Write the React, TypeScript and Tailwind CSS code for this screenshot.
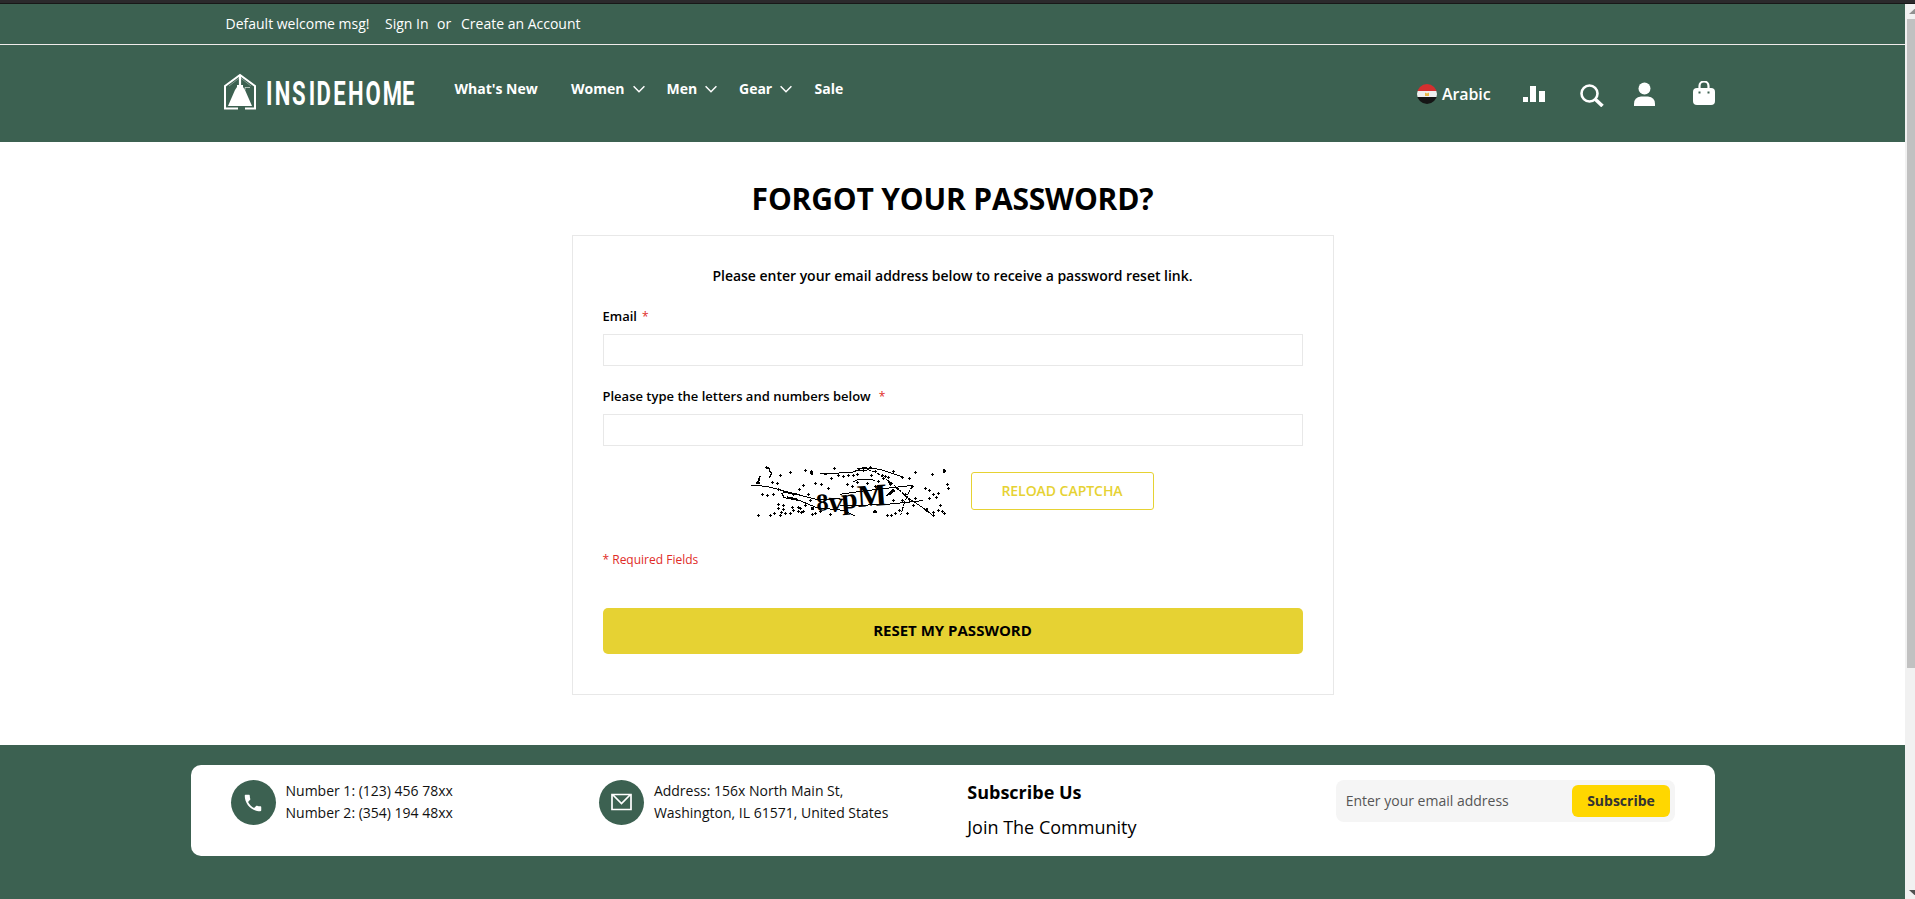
import React from "react";

const dots: [number, number][] = [
  [181, 64], [151, 73], [108, 48], [225, 56], [243, 60], [313, 52], [127, 92], [142, 97], [145, 114], [218, 101],
  [207, 115], [256, 96], [273, 100], [95, 130], [112, 132], [129, 128], [190, 130], [235, 128], [143, 158], [158, 163],
  [145, 172], [133, 185], [120, 193], [153, 183], [165, 187], [180, 185], [205, 180], [205, 168], [218, 180], [225, 163],
  [245, 170], [255, 185], [245, 190], [270, 180], [300, 190], [83, 193], [323, 72], [303, 82], [338, 75], [355, 72],
  [240, 148], [295, 110], [350, 98], [365, 105], [370, 73], [380, 70], [435, 60], [423, 73], [420, 48], [475, 78],
  [478, 92], [490, 60], [515, 78], [538, 80], [556, 64], [607, 70], [652, 100], [655, 112], [586, 112], [596, 118],
  [608, 130], [624, 125], [618, 138], [596, 142], [450, 118], [480, 125], [500, 112], [545, 105], [525, 130], [490, 148],
  [515, 148], [538, 145], [555, 142], [532, 187], [508, 178], [495, 187], [482, 192], [470, 193], [550, 162], [610, 182],
  [608, 193], [624, 177], [630, 162], [635, 180], [643, 185], [380, 92], [412, 95], [435, 105], [400, 58], [457, 72],
  [460, 82], [445, 90], [466, 75], [210, 172], [190, 178], [160, 175], [150, 192], [187, 168], [212, 184], [480, 98],
];

const blobs: [number, number][] = [[84, 95], [643, 60], [435, 182], [590, 177], [245, 66], [248, 172]];

function Captcha() {
  return (
    <svg className="h-[50px] w-[200px] overflow-visible" viewBox="60 45 600 150" fill="none" stroke="#000" strokeWidth="3" shapeRendering="crispEdges">
      {dots.map(([x, y], i) => {
        const px = Math.round(x / 3) * 3 + 1.5;
        const py = Math.round(y / 3) * 3 + 1.5;
        return <path key={i} d={`M${px - 4.5} ${py}h9M${px} ${py - 4.5}v9`} />;
      })}
      {blobs.map(([x, y], i) => (
        <circle key={i} cx={x} cy={y} r="5.5" fill="#000" stroke="none" />
      ))}
      <path d="M63 103L110 106L170 122L262 146L330 143" />
      <path d="M155 125L162 140L210 149L260 170L340 178L375 195" />
      <path d="M160 122L200 130M170 138L205 146" strokeWidth="5" />
      <path d="M270 67L300 68L370 63L400 50L450 55L520 78" />
      <path d="M272 67L292 69M380 53L425 52M385 58L410 58" strokeWidth="5" />
      <path d="M370 92L380 87L425 85L435 90" />
      <path d="M395 50L440 65L490 100L530 138" strokeDasharray="12 4" />
      <path d="M530 138L575 168L605 190" />
      <path d="M330 130L400 120L548 103M330 165L470 160L578 149" />
      <path d="M548 103L535 128L525 150L512 192" strokeDasharray="14 4" />
      <path d="M105 50L119 52M117 56L125 68L117 80" strokeWidth="4" />
      <path d="M84 95L90 75M470 135L490 115M475 130L495 118" strokeWidth="5" />
      <g fill="#000" stroke="none" fontFamily="'Liberation Serif', serif" fontWeight="700">
        <text x="260" y="180" fontSize="74" transform="rotate(-4 260 180)">8</text>
        <text x="293" y="181" fontSize="88" transform="rotate(4 293 181)">v</text>
        <text x="336" y="174" fontSize="88" transform="rotate(-5 336 174)">p</text>
        <text x="384" y="168" fontSize="94" transform="rotate(-4 384 168)">M</text>
      </g>
    </svg>
  );
}

function Logo() {
  return (
    <svg className="h-[38px] w-[196px] overflow-visible" viewBox="0 0 196 38" fill="none">
      <path d="M15 36.500H2V14L17 3L32 14V36.500H22" stroke="#fff" strokeWidth="2" />
      <path d="M17 3V14" stroke="#fff" strokeWidth="2.2" />
      <path d="M14 13H20V15L22 18L29 34H5L12 18L14 15Z" fill="#fff" />
      <path d="M22 18V15.500H27" stroke="#fff" strokeOpacity=".6" />
      <path d="M6 14L17 5.500L28 14" stroke="#fff" strokeOpacity=".35" strokeWidth="1" />
      <g transform="scale(.65 1)">
        <text
          x="66.2 79.5 106 131.8 143.7 169.8 192.3 219.2 245.7 275.5"
          y="33"
          fill="#fff"
          fontFamily="Roboto, sans-serif"
          fontWeight="700"
          fontSize="34"
        >
          INSIDEHOME
        </text>
      </g>
    </svg>
  );
}

function Chevron() {
  return (
    <svg className="mt-px h-3 w-3" viewBox="0 0 12 12" fill="none" stroke="#fff" strokeWidth="1.5">
      <path d="M.6 3.300L6 8.700L11.400 3.300" />
    </svg>
  );
}

function NavItem({ label, width, menu }: { label: string; width: string; menu?: boolean }) {
  return (
    <a className={`flex items-center justify-between ${width}`}>
      {label}
      {menu && <Chevron />}
    </a>
  );
}

function Flag() {
  return (
    <svg className="h-5 w-5" viewBox="0 0 20 20">
      <clipPath id="round"><circle cx="10" cy="10" r="10" /></clipPath>
      <g clipPath="url(#round)">
        <path fill="#d32f2f" d="M0 0h20v7H0z" />
        <path fill="#eee" d="M0 7h20v6H0z" />
        <path fill="#151515" d="M0 13h20v7H0z" />
        <path fill="#e8b84a" d="M8 8.500l1.200.7h1.600L12 8.500V12H8z" />
      </g>
    </svg>
  );
}

function HeaderTools() {
  return (
    <div className="flex h-[26px] items-center text-white">
      <Flag />
      <span className="ml-[5px] w-[81px] text-[16px] font-semibold leading-[26px] tracking-[-0.1px]">Arabic</span>
      <svg className="h-[26px] w-[22px]" viewBox="0 0 22 26" fill="#fff">
        <path d="M0 16h5v5H0zM7 5h6v16H7zM16 10h6v11h-6z" />
      </svg>
      <svg className="ml-[35px] h-[26px] w-6" viewBox="0 0 24 26" fill="none" stroke="#fff">
        <circle cx="9.500" cy="12.500" r="8" strokeWidth="2.600" />
        <path d="M15.500 18.500L22.500 25" strokeWidth="3.600" />
      </svg>
      <svg className="ml-[30px] h-[26px] w-[21px]" viewBox="0 0 21 26" fill="#fff">
        <circle cx="10.500" cy="7.500" r="6" />
        <path d="M0 25v-2q0-7 7-7.500h7q7 .5 7 7.500v2z" />
      </svg>
      <svg className="ml-[38px] h-[26px] w-[22px]" viewBox="0 0 22 26">
        <path d="M6.500 9V5.500a4.500 4.500 0 0 1 9 0V9" transform="translate(0 -.5)" fill="none" stroke="#fff" strokeWidth="2.200" />
        <rect y="7" width="22" height="17" rx="4" fill="#fff" />
        <path d="M5.500 10.500h2v2h-2zM14.500 10.500h2v2h-2z" fill="#3c6151" />
      </svg>
    </div>
  );
}

function Header() {
  return (
    <header className="h-[138px] bg-[#3c6151] text-white">
      <div className="flex h-[41px] items-center border-b border-[#f0ebea] pb-0.5 pl-[225.5px] text-[14px]">
        <span className="w-[159.5px]">Default welcome msg!</span>
        <a className="w-[52px]">Sign In</a>
        <span className="w-6">or</span>
        <a>Create an Account</a>
      </div>
      <div className="flex items-start pl-[223px] pr-[190px]">
        <div className="mt-[27px]"><Logo /></div>
        <nav className="ml-[35.5px] mt-[33px] flex h-5 items-center text-[14px] font-bold">
          <NavItem label="What's New" width="w-[116.5px]" />
          <NavItem label="Women" width="mr-[22px] w-[73.5px]" menu />
          <NavItem label="Men" width="mr-[22px] w-[50.5px]" menu />
          <NavItem label="Gear" width="mr-[22.5px] w-[53px]" menu />
          <NavItem label="Sale" width="w-[30px]" />
        </nav>
        <div className="ml-auto mt-9"><HeaderTools /></div>
      </div>
    </header>
  );
}

function Field({ label, gap }: { label: string; gap: string }) {
  return (
    <div className="mb-5 flex h-[60px] flex-col justify-between">
      <label className="flex h-[22px] items-center text-[13px] font-semibold">
        {label}
        <span className={`text-[12px] font-normal text-[#e02b27] ${gap}`}>*</span>
      </label>
      <input className="h-8 w-full border border-[#e8e8e8] bg-white outline-none" />
    </div>
  );
}

function ForgotPassword() {
  return (
    <main className="flex h-[603px] flex-col items-center pt-[37px] text-black">
      <h1 className="h-14 text-[30px] font-bold leading-[40px] tracking-[-0.18px]">FORGOT YOUR PASSWORD?</h1>
      <form className="h-[460px] w-[762px] border border-[#e8e8e8] px-[30px] pt-[30px]">
        <p className="mb-10 h-0 text-center text-[14px] font-semibold leading-5 tracking-[-0.02px]">
          Please enter your email address below to receive a password reset link.
        </p>
        <Field label="Email" gap="ml-[5px]" />
        <Field label="Please type the letters and numbers below" gap="ml-2" />
        <div className="flex h-[50px] items-center justify-center gap-[21px] pr-0.5">
          <Captcha />
          <button type="button" className="h-[38px] w-[183px] rounded-[3px] border border-[#e6d233] pb-0.5 text-[14px] font-semibold tracking-[-0.05px] text-[#e6d233]">
            RELOAD CAPTCHA
          </button>
        </div>
        <p className="mt-[34px] h-[58px] text-[12px] leading-5 text-[#e02b27]">* Required Fields</p>
        <button type="button" className="h-[46px] w-full rounded-[5px] bg-[#e6d233] pb-0.5 text-[15px] font-bold">
          RESET MY PASSWORD
        </button>
      </form>
    </main>
  );
}

function Disc({ children }: { children: React.ReactNode }) {
  return <span className="mr-2.5 flex h-[45px] w-[45px] items-center justify-center rounded-full bg-[#3c6151]">{children}</span>;
}

function Footer() {
  return (
    <footer className="h-[154px] bg-[#3c6151] pt-5 pl-[191px]">
      <div className="grid h-[91px] w-[1524px] grid-cols-4 rounded-[10px] bg-white pr-[26px] pl-[24.5px] pt-[15px] text-[14px] leading-[22px] text-[#111]">
        <div className="flex px-[15px]">
          <Disc>
            <svg className="h-[22px] w-[22px]" viewBox="0 0 24 24" fill="#fff">
              <path d="M6.620 10.790c1.440 2.830 3.760 5.140 6.590 6.590l2.200-2.200c.270-.270.670-.360 1.020-.240 1.120.370 2.330.570 3.570.570.550 0 1 .450 1 1V20c0 .550-.450 1-1 1-9.390 0-17-7.610-17-17 0-.550.450-1 1-1h3.500c.550 0 1 .450 1 1 0 1.250.200 2.450.570 3.570.110.350.030.740-.250 1.020z" />
            </svg>
          </Disc>
          <div>Number 1: (123) 456 78xx<br />Number 2: (354) 194 48xx</div>
        </div>
        <div className="flex px-[15px]">
          <Disc>
            <svg className="-mt-px h-[18px] w-[21px]" viewBox="0 0 21 18" fill="none" stroke="#fff" strokeWidth="1.700">
              <path d="M1 1.500H20V16.500H1ZM2 2L10.500 10.500L19 2" />
            </svg>
          </Disc>
          <div>Address: 156x North Main St,<br />Washington, IL 61571, United States</div>
        </div>
        <div className="px-[15px] text-[18px] text-black">
          <h2 className="h-9 pt-px font-bold">Subscribe Us</h2>
          <p>Join The Community</p>
        </div>
        <div className="pr-3.5 pl-[15px]">
          <div className="flex h-[42px] items-center justify-between rounded-[8px] bg-[#f5f5f5] pl-2.5 pr-[5px]">
            <span className="text-[#555]">Enter your email address</span>
            <button className="h-8 w-[98px] rounded-[6px] bg-[#ffd700] font-bold text-[#333]">Subscribe</button>
          </div>
        </div>
      </div>
    </footer>
  );
}

function Scrollbar() {
  return (
    <div className="flex h-[895px] w-2.5 flex-col bg-[#f1f1f1] pl-0.5">
      <svg className="h-[15px] w-2" viewBox="0 0 8 15"><path d="M2 10L7.500 5L8 5V10z" fill="#909090" /></svg>
      <div className="h-[649px] bg-[#c1c1c1]" />
      <svg className="mt-auto h-[15px] w-2" viewBox="0 0 8 15"><path d="M2 6L7.500 11H8V6z" fill="#505050" /></svg>
    </div>
  );
}

export default function App() {
  return (
    <div className="h-[899px] w-[1915px] overflow-hidden bg-white font-['Open_Sans',sans-serif]">
      <div className="h-1 border-b border-[#181818] bg-[#2b2a2c]" />
      <div className="flex">
        <div className="w-[1905px]">
          <Header />
          <ForgotPassword />
          <Footer />
        </div>
        <Scrollbar />
      </div>
    </div>
  );
}
